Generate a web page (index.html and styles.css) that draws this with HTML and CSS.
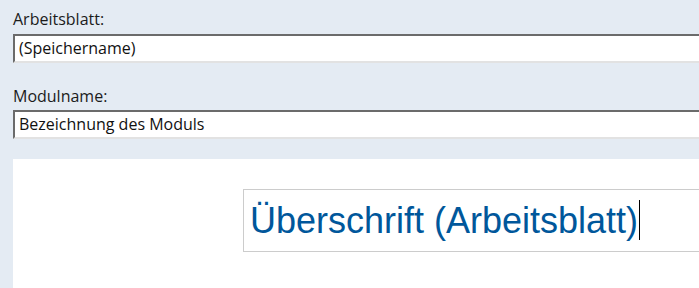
FILE: index.html
```html
<!DOCTYPE html>
<html lang="de">
<head>
<meta charset="utf-8">
<title>Arbeitsblatt</title>
<link rel="stylesheet" href="styles.css">
</head>
<body>
<div class="page">
  <div class="field">
    <label class="label" for="ws">Arbeitsblatt:</label>
    <div class="input" id="ws">(Speichername)</div>
  </div>
  <div class="field field-second">
    <label class="label" for="mod">Modulname:</label>
    <div class="input" id="mod">Bezeichnung des Moduls</div>
  </div>
  <div class="panel">
    <div class="heading-box"><span class="heading">Überschrift (Arbeitsblatt)</span><span class="caret"></span></div>
  </div>
</div>
</body>
</html>
```

FILE: styles.css
```css
html, body {
  margin: 0;
  padding: 0;
  height: 100%;
}
body {
  background: #e4ebf3;
  overflow: hidden;
  font-family: "Open Sans", "Noto Sans", sans-serif;
  color: #1b1b1b;
}
.page {
  width: 800px;
  padding: 9px 0 0 13px;
  box-sizing: border-box;
  height: 100%;
  display: flex;
  flex-direction: column;
}
.field {
  display: flex;
  flex-direction: column;
}
.field-second {
  margin-top: 23px;
}
.label {
  display: block;
  font-size: 16px;
  line-height: 20px;
  margin-bottom: 5px;
}
.field-second .label {
  margin-bottom: 4px;
}
.input {
  background: #ffffff;
  border-top: 2px solid #6b6b6b;
  border-left: 2px solid #6b6b6b;
  border-bottom: 2px solid #e2e2e2;
  height: 25px;
  line-height: 25px;
  font-size: 16px;
  padding-left: 4px;
  color: #111;
}
.panel {
  margin-top: 20px;
  background: #ffffff;
  flex: 1;
  padding: 30px 0 0 230px;
}
.heading-box {
  border: 1px solid #cccccc;
  padding: 10px 6px;
  height: 41px;
  line-height: 41px;
  white-space: nowrap;
}
.heading {
  font-family: "Liberation Sans", Arial, sans-serif;
  font-size: 36px;
  color: #00579b;
  vertical-align: top;
}
.caret {
  display: inline-block;
  width: 1px;
  height: 40px;
  background: #000;
  margin-left: 1px;
  vertical-align: top;
}
```
